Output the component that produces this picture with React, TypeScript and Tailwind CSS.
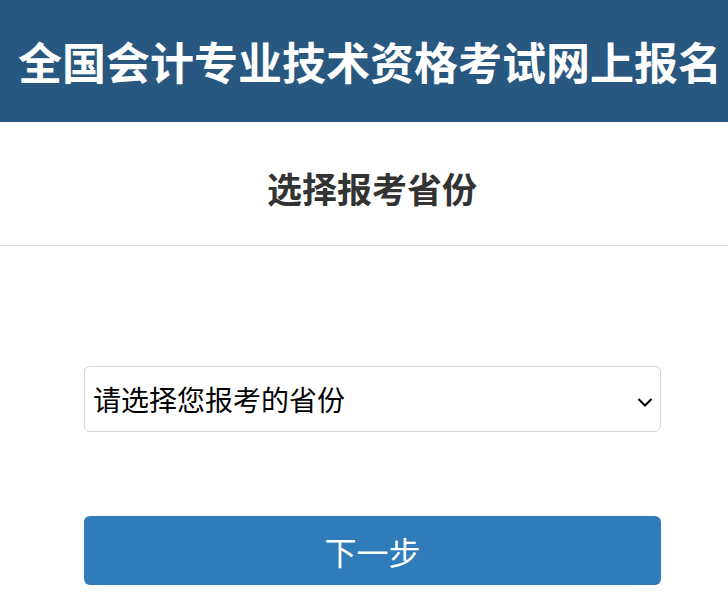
import { type FC } from 'react';

const font = { fontFamily: '"Noto Sans CJK SC", "Noto Sans", sans-serif' };

const App: FC = () => {
  return (
    <div className="min-h-[611px] bg-white" style={font}>
      <header className="h-[122px] bg-[#28577f] flex items-center justify-center pl-[12px]">
        <h1 className="text-[44px] font-bold text-white leading-none whitespace-nowrap">
          全国会计专业技术资格考试网上报名
        </h1>
      </header>

      <div className="h-[124px] flex items-center justify-center border-b border-[#dddddd] pl-[16px] pt-[8px]">
        <h2 className="text-[35px] font-bold text-[#333333] leading-none">选择报考省份</h2>
      </div>

      <div className="pl-[84px] pr-[67px] pt-[120px]">
        <div className="relative h-[66px] border border-[#d4d4d4] rounded-[6px] flex items-center pl-[8px]">
          <span className="text-[28px] text-black leading-none">请选择您报考的省份</span>
          <svg
            className="absolute right-[7px] top-[31px]"
            width="16"
            height="9"
            viewBox="0 0 16 9"
            fill="none"
            stroke="black"
            strokeWidth="2"
          >
            <path d="M1.5 1 L8 7.5 L14.5 1" />
          </svg>
        </div>

        <button className="mt-[84px] w-full h-[69px] bg-[#307cbb] rounded-[6px] text-white text-[32px] leading-none">
          下一步
        </button>
      </div>
    </div>
  );
};

export default App;
